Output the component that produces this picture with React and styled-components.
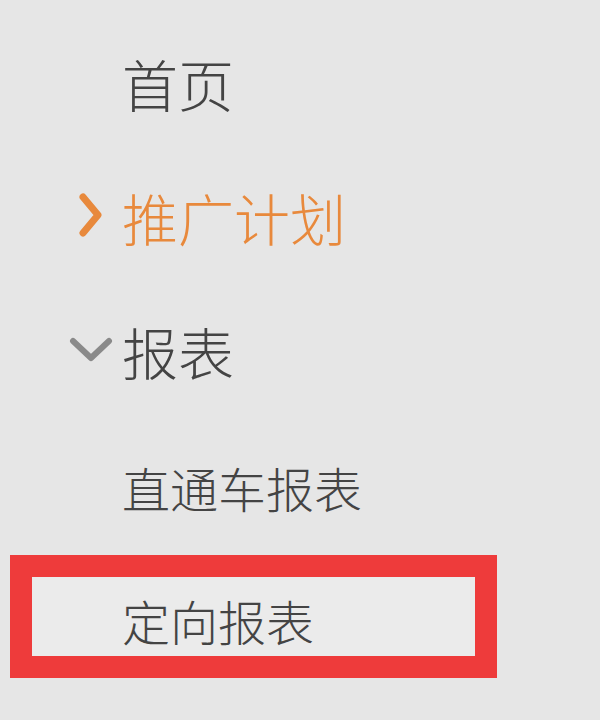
import React from "react";
import styled, { createGlobalStyle } from "styled-components";

const GlobalStyle = createGlobalStyle`
  html, body {
    margin: 0;
    padding: 0;
    background: #e6e6e6;
  }
  body {
    font-family: "Noto Sans CJK SC", "Noto Sans", sans-serif;
  }
`;

const Menu = styled.nav`
  width: 600px;
  height: 720px;
  box-sizing: border-box;
  padding-top: 16px;
  display: flex;
  flex-direction: column;
  background: #e6e6e6;
  overflow: hidden;
`;

const Row = styled.div`
  height: ${(p) => (p.$sub ? "137px" : "134px")};
  display: flex;
  align-items: center;
  padding-left: 60px;
  box-sizing: border-box;
  color: ${(p) => (p.$active ? "#e8893c" : "#444444")};
  font-size: ${(p) => (p.$sub ? "48px" : "56px")};
  font-weight: 300;
  line-height: 1;
`;

const IconSlot = styled.span`
  width: 62px;
  height: 60px;
  display: flex;
  align-items: center;
  justify-content: center;
  flex-shrink: 0;
`;

const Label = styled.span`
  white-space: nowrap;
`;

const Selected = styled.div`
  margin-left: 10px;
  width: 487px;
  height: 123px;
  box-sizing: border-box;
  border: 22px solid #ee3b3b;
  background: #ebebeb;
  display: flex;
  align-items: center;
  padding-left: 90px;
  padding-top: 6px;
  font-size: 48px;
  font-weight: 300;
  line-height: 1;
  color: #444444;
`;

const ChevronRight = () => (
  <svg width="26" height="48" viewBox="0 0 26 48">
    <polyline
      points="5,4 20,22 5,40"
      fill="none"
      stroke="#e8893c"
      strokeWidth="7"
      strokeLinecap="round"
      strokeLinejoin="round"
    />
  </svg>
);

const ChevronDown = () => (
  <svg width="44" height="28" viewBox="0 0 44 28">
    <polyline
      points="4,4 22,21 40,4"
      fill="none"
      stroke="#8a8a8a"
      strokeWidth="6"
      strokeLinecap="round"
      strokeLinejoin="round"
    />
  </svg>
);

const App = () => (
  <>
    <GlobalStyle />
    <Menu>
      <Row>
        <IconSlot />
        <Label>首页</Label>
      </Row>
      <Row $active>
        <IconSlot>
          <ChevronRight />
        </IconSlot>
        <Label>推广计划</Label>
      </Row>
      <Row>
        <IconSlot>
          <ChevronDown />
        </IconSlot>
        <Label>报表</Label>
      </Row>
      <Row $sub>
        <IconSlot />
        <Label>直通车报表</Label>
      </Row>
      <Selected>定向报表</Selected>
    </Menu>
  </>
);

export default App;
